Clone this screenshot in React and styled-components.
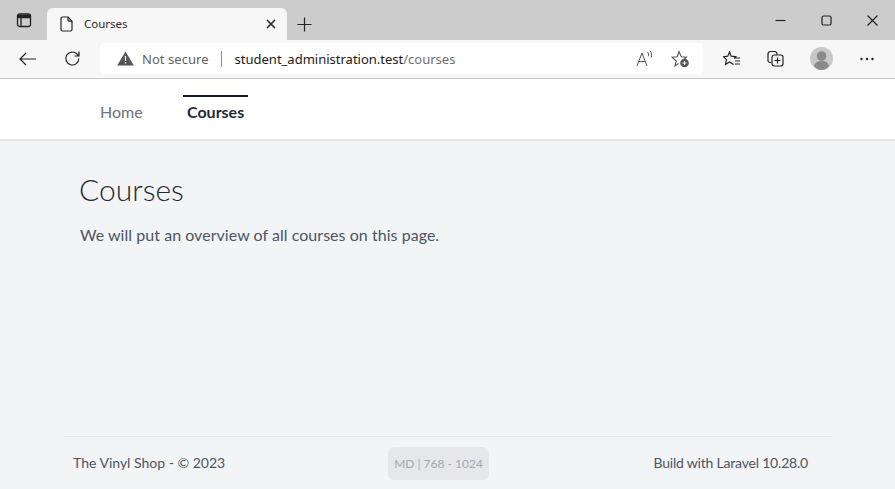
import React from 'react';
import styled, { createGlobalStyle } from 'styled-components';

const Global = createGlobalStyle`
  html, body { margin: 0; padding: 0; background: #f3f4f6; }
  body { font-family: "Lato", "Open Sans", sans-serif; overflow: hidden; }
  * { box-sizing: border-box; }
`;
const Page = styled.div`width: 895px; height: 489px; display: flex; flex-direction: column; overflow: hidden;`;
const TabStrip = styled.div`height: 40px; background: #cccccc; display: flex; align-items: flex-end; flex: none;`;
const SideButton = styled.div`width: 47px; height: 40px; display: flex; align-items: center; justify-content: center; padding: 0 0 0 1px;`;
const Tab = styled.div`width: 240px; height: 32px; background: #f7f7f7; border-radius: 6px 6px 0 0; display: flex; align-items: center; padding: 0 11px 0 13px;`;
const TabTitle = styled.span`font-family: "Noto Sans", sans-serif; font-size: 11.5px; color: #2b2b2b; margin: 0 0 1px 11px; flex: 1;`;
const NewTab = styled.div`width: 36px; height: 40px; display: flex; align-items: center; justify-content: center; padding: 8px 1px 0 0;`;
const Spacer = styled.div`flex: 1;`;
const WindowControls = styled.div`display: flex; height: 40px; align-items: center;`;
const WinButton = styled.div`width: 46px; height: 40px; display: flex; align-items: center; justify-content: center;`;
const Toolbar = styled.div`height: 39px; background: #f7f7f7; border-bottom: 1px solid #c4c4c8; display: flex; align-items: center; flex: none; padding-bottom: 1px;`;
const NavIcon = styled.div`width: ${p => p.$w || 44}px; height: 36px; display: flex; align-items: center; justify-content: center;`;
const AddressBar = styled.div`width: 603px; height: 31px; margin-left: 10px; background: #fff; border-radius: 4px; display: flex; align-items: center; padding-left: 17px; font-family: "Noto Sans", sans-serif; font-size: 13px;`;
const Secure = styled.span`color: #5f5f5f; margin-left: 8px; letter-spacing: 0.05px;`;
const Divider = styled.span`width: 1px; height: 16px; background: #8a8a8a; margin: 0 13px 0 12px;`;
const Host = styled.span`color: #1a1a1a;`;
const UrlPath = styled.span`color: #6e6e6e;`;
const BarIcons = styled.div`margin-left: auto; display: flex; align-items: center; gap: 18px; padding-right: 13px;`;
const RightIcons = styled.div`display: flex; align-items: center; margin-left: 7px;`;
const Nav = styled.nav`height: 62px; background: #fff; border-bottom: 2px solid #e5e7eb; display: flex; padding-left: 80px; gap: 19px; flex: none; align-items: flex-start;`;
const NavLink = styled.a`
  height: 30px; margin-top: 16px; padding: 0 4px;
  display: flex; align-items: center;
  border-top: 2px solid ${p => p.$active ? '#111827' : 'transparent'};
  font-size: 16px; font-weight: ${p => p.$active ? 700 : 400};
  color: ${p => p.$active ? '#1f2937' : '#6b7280'};
`;
const HomeLink = styled(NavLink)`padding: 0 0 0 20px; width: 84px;`;
const Main = styled.main`flex: 1; padding: 30px 0 0 80px; background: #f3f4f6;`;
const Title = styled.h1`margin: 0 0 0 -1px; font-size: 30px; font-weight: 300; line-height: 36px; color: #1f2937;`;
const Lead = styled.p`margin: 16px 0 0; font-size: 16px; line-height: 24px; color: #4b5563; font-weight: 400; letter-spacing: 0.04px;`;
const Footer = styled.footer`
  margin: 0 63px 0 64px; height: 53px; border-top: 1px solid #e5e7eb; flex: none;
  display: grid; grid-template-columns: 1fr auto 1fr; align-items: center; padding: 0 24px 2px 9px;
  font-size: 14px; color: #4b5563;
`;
const Badge = styled.div`height: 33px; width: 101px; margin-top: 2px; margin-left: -4px; background: #e5e7eb; border-radius: 6px; display: flex; align-items: center; justify-content: center; font-size: 12px; color: #a3a8b0; white-space: nowrap;`;
const FooterRight = styled.span`text-align: right; letter-spacing: -0.2px;`;

const S = { fill: 'none', stroke: '#222', strokeWidth: 1.2 };
const G = { fill: 'none', stroke: '#555', strokeWidth: 1.1 };

export default function App() {
  return (
    <Page>
      <Global />
      <TabStrip>
        <SideButton>
          <svg width="16" height="16" viewBox="0 0 16 16" {...S} strokeWidth="1.3"><rect x="1.5" y="2" width="13" height="12.5" rx="2" /><path d="M1.5 5.5h13M5 5.5v9" /><path d="M2 4h12" strokeWidth="2.500" /></svg>
        </SideButton>
        <Tab>
          <svg width="13" height="16" viewBox="0 0 13 16" {...S}><path d="M1 2.5a1.5 1.5 0 0 1 1.5-1.5H8l4 4.2v8.3a1.5 1.5 0 0 1-1.5 1.5h-8A1.5 1.5 0 0 1 1 13.5z" /><path d="M8 1v3a1.2 1.2 0 0 0 1.2 1.2H12" /></svg>
          <TabTitle>Courses</TabTitle>
          <svg width="10" height="10" viewBox="0 0 10 10" fill="none" stroke="#222" strokeWidth="1.500"><path d="M1 1l8 8M9 1l-8 8" /></svg>
        </Tab>
        <NewTab>
          <svg width="15" height="15" viewBox="0 0 15 15" {...S}><path d="M7.5 0.5v14M0.5 7.500h14" /></svg>
        </NewTab>
        <Spacer />
        <WindowControls>
          <WinButton><svg width="11" height="11" viewBox="0 0 11 11" {...S}><path d="M0.5 5.500h10" /></svg></WinButton>
          <WinButton><svg width="11" height="11" viewBox="0 0 11 11" {...S}><rect x="1" y="1" width="9" height="9" rx="1.5" /></svg></WinButton>
          <WinButton><svg width="11" height="11" viewBox="0 0 11 11" {...S}><path d="M0.5 0.5l10 10M10.5 0.5l-10 10" /></svg></WinButton>
        </WindowControls>
      </TabStrip>
      <Toolbar>
        <NavIcon $w={55}>
          <svg width="18" height="14" viewBox="0 0 18 14" {...S}><path d="M17 7H1M7 1L1 7l6 6" /></svg>
        </NavIcon>
        <NavIcon $w={35}>
          <svg width="17" height="17" viewBox="0 0 17 17" {...S}><path d="M14.800 8.500a6.500 6.500 0 1 1-2-4.700L15 6M15 1.500V6h-4.500" /></svg>
        </NavIcon>
        <AddressBar>
          <svg width="17" height="15" viewBox="0 0 17 15"><path d="M8.500 0.500L16.800 14.500H0.200z" fill="#555" /><path d="M8.500 5v5M8.500 11.200v1.400" stroke="#fff" strokeWidth="1.200" /></svg>
          <Secure>Not secure</Secure>
          <Divider />
          <Host>student_administration.test</Host><UrlPath>/courses</UrlPath>
          <BarIcons>
            <svg width="17" height="17" viewBox="0 0 17 17" {...G} strokeWidth="1"><path d="M1 16L6 3l5 13M2.800 11.500h6.400M11.500 2c1 1.200 1.300 2.800.8 4.300M14 .8c1.700 2 2 4.500 1.200 6.700" /></svg>
            <svg width="19" height="18" viewBox="0 0 19 18" {...G}><path d="M7.500 13.500L4 16l1.300-5L1 7.200l5.200-.5L8 1.500l2.300 5.200 5.200.5-2.500 2" /><circle cx="13.500" cy="13" r="4.300" fill="#555" stroke="none" /><path d="M13.500 11v4M11.500 13h4" stroke="#fff" /></svg>
          </BarIcons>
        </AddressBar>
        <RightIcons>
          <NavIcon $w={44}>
            <svg width="18" height="16" viewBox="0 0 18 16" {...S}><path d="M10.500 13.500L6.500 11l-4 2.500 1-4.800-3-3 4.300-.5L6.500 1l1.700 4.200 4.600.5-1.800 1.800M12 7h5M12 10h5M12 13h5" /></svg>
          </NavIcon>
          <NavIcon $w={43}>
            <svg width="17" height="17" viewBox="0 0 17 17" {...S}><path d="M4 12.500H3A2 2 0 0 1 1 10.500V4a2.500 2.500 0 0 1 2.500-2.500h4a2.500 2.500 0 0 1 2.300 3.500" /><rect x="5" y="5" width="11" height="11" rx="2.200" /><path d="M10.500 7.500v6M7.500 10.500h6" /></svg>
          </NavIcon>
          <NavIcon $w={48}>
            <svg width="23" height="23" viewBox="0 0 23 23"><circle cx="11.500" cy="11.500" r="11.500" fill="#c8c8c8" /><circle cx="11.500" cy="9" r="4.800" fill="#8a8a8a" /><path d="M4 19c1-4 4-5 7.500-5s6.500 1 7.500 5c-2 2.500-5 4-7.500 4S6 21.500 4 19z" fill="#8a8a8a" /></svg>
          </NavIcon>
          <NavIcon $w={44}>
            <svg width="14" height="4" viewBox="0 0 14 4" fill="#222"><circle cx="1.500" cy="2" r="1.200" /><circle cx="7" cy="2" r="1.200" /><circle cx="12.500" cy="2" r="1.200" /></svg>
          </NavIcon>
        </RightIcons>
      </Toolbar>
      <Nav>
        <HomeLink>Home</HomeLink>
        <NavLink $active>Courses</NavLink>
      </Nav>
      <Main>
        <Title>Courses</Title>
        <Lead>We will put an overview of all courses on this page.</Lead>
      </Main>
      <Footer>
        <span>The Vinyl Shop - © 2023</span>
        <Badge>MD | 768 - 1024</Badge>
        <FooterRight>Build with Laravel 10.28.0</FooterRight>
      </Footer>
    </Page>
  );
}
